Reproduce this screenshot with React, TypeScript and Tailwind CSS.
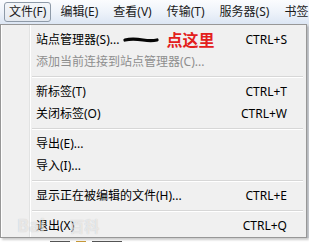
const FONT = '"Noto Sans", "Noto Sans CJK SC", sans-serif'

type Row =
  | { kind: 'item'; label: string; shortcut?: string; disabled?: boolean; note?: boolean }
  | { kind: 'sep' }

const ROWS: Row[] = [
  { kind: 'item', label: '站点管理器(S)...', shortcut: 'CTRL+S', note: true },
  { kind: 'item', label: '添加当前连接到站点管理器(C)...', disabled: true },
  { kind: 'sep' },
  { kind: 'item', label: '新标签(T)', shortcut: 'CTRL+T' },
  { kind: 'item', label: '关闭标签(O)', shortcut: 'CTRL+W' },
  { kind: 'sep' },
  { kind: 'item', label: '导出(E)...' },
  { kind: 'item', label: '导入(I)...' },
  { kind: 'sep' },
  { kind: 'item', label: '显示正在被编辑的文件(H)...', shortcut: 'CTRL+E' },
  { kind: 'sep' },
  { kind: 'item', label: '退出(X)', shortcut: 'CTRL+Q' },
]

const MENUBAR = ['编辑(E)', '查看(V)', '传输(T)', '服务器(S)', '书签']

function Scribble() {
  return (
    <svg width="36" height="6" viewBox="0 0 36 6" className="ml-[4px] mr-[7px] shrink-0">
      <path
        d="M2 3 C 8 1.5, 14 2, 20 3 S 30 4, 34 3"
        stroke="#050505"
        strokeWidth="3.2"
        strokeLinecap="round"
        fill="none"
      />
    </svg>
  )
}

function MenuRow({ row }: { row: Row }) {
  if (row.kind === 'sep') {
    return (
      <div className="h-[8px] pt-[3px] pl-[31px] pr-[3px]">
        <div className="h-px bg-[#d7d7d7]" />
        <div className="h-px bg-white" />
      </div>
    )
  }
  return (
    <div className="flex h-[22px] items-center whitespace-nowrap pl-[35px] pr-[19px]">
      <span className={row.disabled ? 'text-[#8e8e8e]' : 'text-[#000]'}>{row.label}</span>
      {row.note && (
        <>
          <Scribble />
          <span className="text-[16px] font-bold leading-none text-[#e3201c]">点这里</span>
        </>
      )}
      {row.shortcut && <span className="ml-auto text-[#000]">{row.shortcut}</span>}
    </div>
  )
}

export default function App() {
  return (
    <div
      className="relative h-[242px] w-[309px] overflow-hidden bg-[#dfe3e8] text-[12px] leading-none"
      style={{ fontFamily: FONT }}
    >
      {/* menubar */}
      <div className="flex h-[24px] items-center overflow-hidden whitespace-nowrap bg-gradient-to-b from-[#fbfcfe] via-[#eef3fa] to-[#dce6f4] pl-[4px] text-[12px] text-[#1a1a1a]">
        <div className="flex h-[20px] shrink-0 items-center rounded-[3px] border border-[#8e9aa8] bg-gradient-to-b from-[#f4f6f9] to-[#e4e9f0] px-[4px]">
          文件(F)
        </div>
        <div className="ml-[9px] flex shrink-0 gap-[15px]">
          {MENUBAR.map((m) => (
            <span key={m} className="shrink-0">
              {m}
            </span>
          ))}
        </div>
      </div>

      {/* dropdown */}
      <div className="relative w-[307px] border border-[#979797] bg-[#f0f0f0] pt-[4px] shadow-[2px_2px_2px_rgba(0,0,0,0.2)]">
        <div className="absolute bottom-0 left-0 top-0 w-px bg-white" />
        <div className="absolute bottom-0 left-[28px] top-0 w-px bg-[#e2e3e3]" />
        <div className="absolute bottom-0 left-[29px] top-0 w-px bg-white" />
        <div className="relative">
          {ROWS.map((row, i) => (
            <MenuRow key={i} row={row} />
          ))}
        </div>
        {/* watermark */}
        <div className="pointer-events-none absolute bottom-[3px] left-[16px] flex items-end text-[18px] font-bold text-white/60 [text-shadow:0_0_1px_rgba(0,0,0,0.2)]">
          <span>Bai</span>
          <span className="ml-[24px] text-[15px]">百科</span>
        </div>
      </div>

      {/* content peeking below */}
      <div className="flex h-[6px] items-end gap-[6px] bg-white pl-[50px]">
        <div className="h-[3px] w-[20px] bg-[#555]" />
        <div className="h-[3px] w-[10px] bg-[#c89a3a]" />
        <div className="h-[3px] w-[30px] bg-[#555]" />
      </div>
    </div>
  )
}
